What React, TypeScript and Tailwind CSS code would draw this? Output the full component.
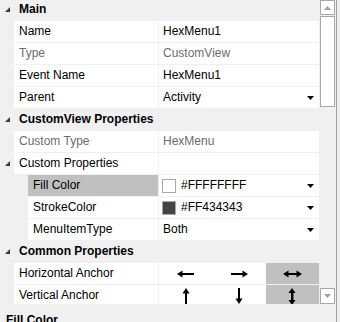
import React from "react";

const Expander = () => (
  <svg width="5" height="5" viewBox="0 0 5 5" className="block">
    <polygon points="5,0 5,5 0,5" fill="#3c3c3c" />
  </svg>
);

const DropArrow = () => (
  <svg width="7" height="4" viewBox="0 0 7 4" className="block shrink-0">
    <polygon points="0,0 7,0 3.5,4" fill="#000" />
  </svg>
);

const ArrowLeft = () => (
  <svg width="18" height="8" viewBox="0 0 18 8" className="block">
    <rect x="3" y="3" width="14" height="2" fill="#000" />
    <polygon points="0,4 5.5,0.5 5.5,7.5" fill="#000" />
  </svg>
);
const ArrowRight = () => (
  <svg width="18" height="8" viewBox="0 0 18 8" className="block">
    <rect x="1" y="3" width="14" height="2" fill="#000" />
    <polygon points="18,4 12.5,0.5 12.5,7.5" fill="#000" />
  </svg>
);
const ArrowBoth = () => (
  <svg width="19" height="8" viewBox="0 0 19 8" className="block">
    <rect x="3" y="3" width="13" height="2" fill="#000" />
    <polygon points="0,4 5.5,0.5 5.5,7.5" fill="#000" />
    <polygon points="19,4 13.5,0.5 13.5,7.5" fill="#000" />
  </svg>
);
const ArrowUp = () => (
  <svg width="8" height="16" viewBox="0 0 8 16" className="block">
    <rect x="3" y="3" width="2" height="13" fill="#000" />
    <polygon points="4,0 0.5,5.5 7.5,5.5" fill="#000" />
  </svg>
);
const ArrowDown = () => (
  <svg width="8" height="16" viewBox="0 0 8 16" className="block">
    <rect x="3" y="0" width="2" height="13" fill="#000" />
    <polygon points="4,16 0.5,10.5 7.5,10.5" fill="#000" />
  </svg>
);
const ArrowUpDown = () => (
  <svg width="8" height="17" viewBox="0 0 8 17" className="block">
    <rect x="3" y="3" width="2.4" height="11" fill="#000" />
    <polygon points="4,0 0.5,5 7.5,5" fill="#000" />
    <polygon points="4,17 0.5,12 7.5,12" fill="#000" />
  </svg>
);

const Header = ({ label }: { label: string }) => (
  <div className="flex h-[21px] items-center">
    <div className="flex w-[14px] shrink-0 justify-center pl-px">
      <Expander />
    </div>
    <div className="pl-[5px] font-bold text-black">{label}</div>
  </div>
);

type RowProps = {
  label: string;
  nested?: boolean;
  expander?: boolean;
  dim?: boolean;
  selected?: boolean;
  children?: React.ReactNode;
};

const Row = ({ label, nested, expander, dim, selected, children }: RowProps) => (
  <div className="flex h-[21px]">
    <div className="flex w-[14px] shrink-0 items-center justify-center pl-px">
      {expander ? <Expander /> : null}
    </div>
    {nested ? <div className="w-[14px] shrink-0" /> : null}
    <div
      className={
        "flex flex-1 items-center pl-[5px] " +
        (selected ? "bg-[#c0c0c0] " : "bg-white ") +
        (dim ? "text-[#6d6d6d]" : "text-black")
      }
    >
      {label}
    </div>
    <div className="w-px shrink-0" />
    <div className="flex w-[160px] shrink-0 bg-white">{children}</div>
    <div className="w-px shrink-0" />
  </div>
);

const TextValue = ({ text, dim, drop }: { text: string; dim?: boolean; drop?: boolean }) => (
  <div className="flex flex-1 items-center justify-between pl-[4px] pr-[5px]">
    <span className={dim ? "text-[#6d6d6d]" : "text-black"}>{text}</span>
    {drop ? <DropArrow /> : null}
  </div>
);

const ColorValue = ({ text, swatch }: { text: string; swatch: string }) => (
  <div className="flex flex-1 items-center justify-between pl-[3px] pr-[5px]">
    <div className="flex items-center">
      <div className={"h-[14px] w-[14px] border border-[#a8a8a8] " + swatch} />
      <span className="ml-[5px] text-black">{text}</span>
    </div>
    <DropArrow />
  </div>
);

export default function App() {
  return (
    <div className="flex h-[322px] w-[340px] overflow-hidden bg-[#f0f0f0] font-['Liberation_Sans',Arial,sans-serif] text-[12px] leading-[21px]">
      <div className="flex w-[336px] shrink-0 flex-col">
        <div className="flex h-[304px] shrink-0">
          <div className="w-[320px] shrink-0 overflow-hidden">
            <div className="-mt-px flex flex-col gap-px">
              <Header label="Main" />
              <Row label="Name">
                <TextValue text="HexMenu1" />
              </Row>
              <Row label="Type" dim>
                <TextValue text="CustomView" dim />
              </Row>
              <Row label="Event Name">
                <TextValue text="HexMenu1" />
              </Row>
              <Row label="Parent">
                <TextValue text="Activity" drop />
              </Row>
              <Header label="CustomView Properties" />
              <Row label="Custom Type" dim>
                <TextValue text="HexMenu" dim />
              </Row>
              <Row label="Custom Properties" expander />
              <Row label="Fill Color" nested selected>
                <ColorValue text="#FFFFFFFF" swatch="bg-white" />
              </Row>
              <Row label="StrokeColor" nested>
                <ColorValue text="#FF434343" swatch="bg-[#434343]" />
              </Row>
              <Row label="MenuItemType" nested>
                <TextValue text="Both" drop />
              </Row>
              <Header label="Common Properties" />
              <Row label="Horizontal Anchor">
                <div className="grid flex-1 grid-cols-3">
                  <div className="flex items-center justify-center">
                    <ArrowLeft />
                  </div>
                  <div className="flex items-center justify-center">
                    <ArrowRight />
                  </div>
                  <div className="flex items-center justify-center bg-[#c0c0c0]">
                    <ArrowBoth />
                  </div>
                </div>
              </Row>
              <Row label="Vertical Anchor">
                <div className="grid flex-1 grid-cols-3">
                  <div className="flex items-center justify-center pt-px">
                    <ArrowUp />
                  </div>
                  <div className="flex items-center justify-center pt-px">
                    <ArrowDown />
                  </div>
                  <div className="flex items-center justify-center bg-[#c0c0c0] pt-px">
                    <ArrowUpDown />
                  </div>
                </div>
              </Row>
            </div>
          </div>
          <div className="flex w-[16px] shrink-0 flex-col">
            <div className="flex h-[15px] w-[15px] items-center justify-center border border-[#a8a8a8] bg-white">
              <svg width="7" height="4" viewBox="0 0 7 4" className="block">
                <polygon points="0,4 7,4 3.5,0" fill="#a0a0a0" />
              </svg>
            </div>
            <div className="mt-px h-[91px] w-[15px] border border-[#a8a8a8] bg-white" />
            <div className="flex-1" />
            <div className="flex h-[16px] w-[15px] items-center justify-center border border-[#a8a8a8] bg-white">
              <svg width="7" height="4" viewBox="0 0 7 4" className="block">
                <polygon points="0,0 7,0 3.5,4" fill="#a0a0a0" />
              </svg>
            </div>
          </div>
        </div>
        <div className="pl-[6px] pt-[8px] font-bold leading-[16px] text-black">Fill Color</div>
      </div>
      <div className="w-px shrink-0 bg-[#a0a0a0]" />
      <div className="flex-1" />
    </div>
  );
}
